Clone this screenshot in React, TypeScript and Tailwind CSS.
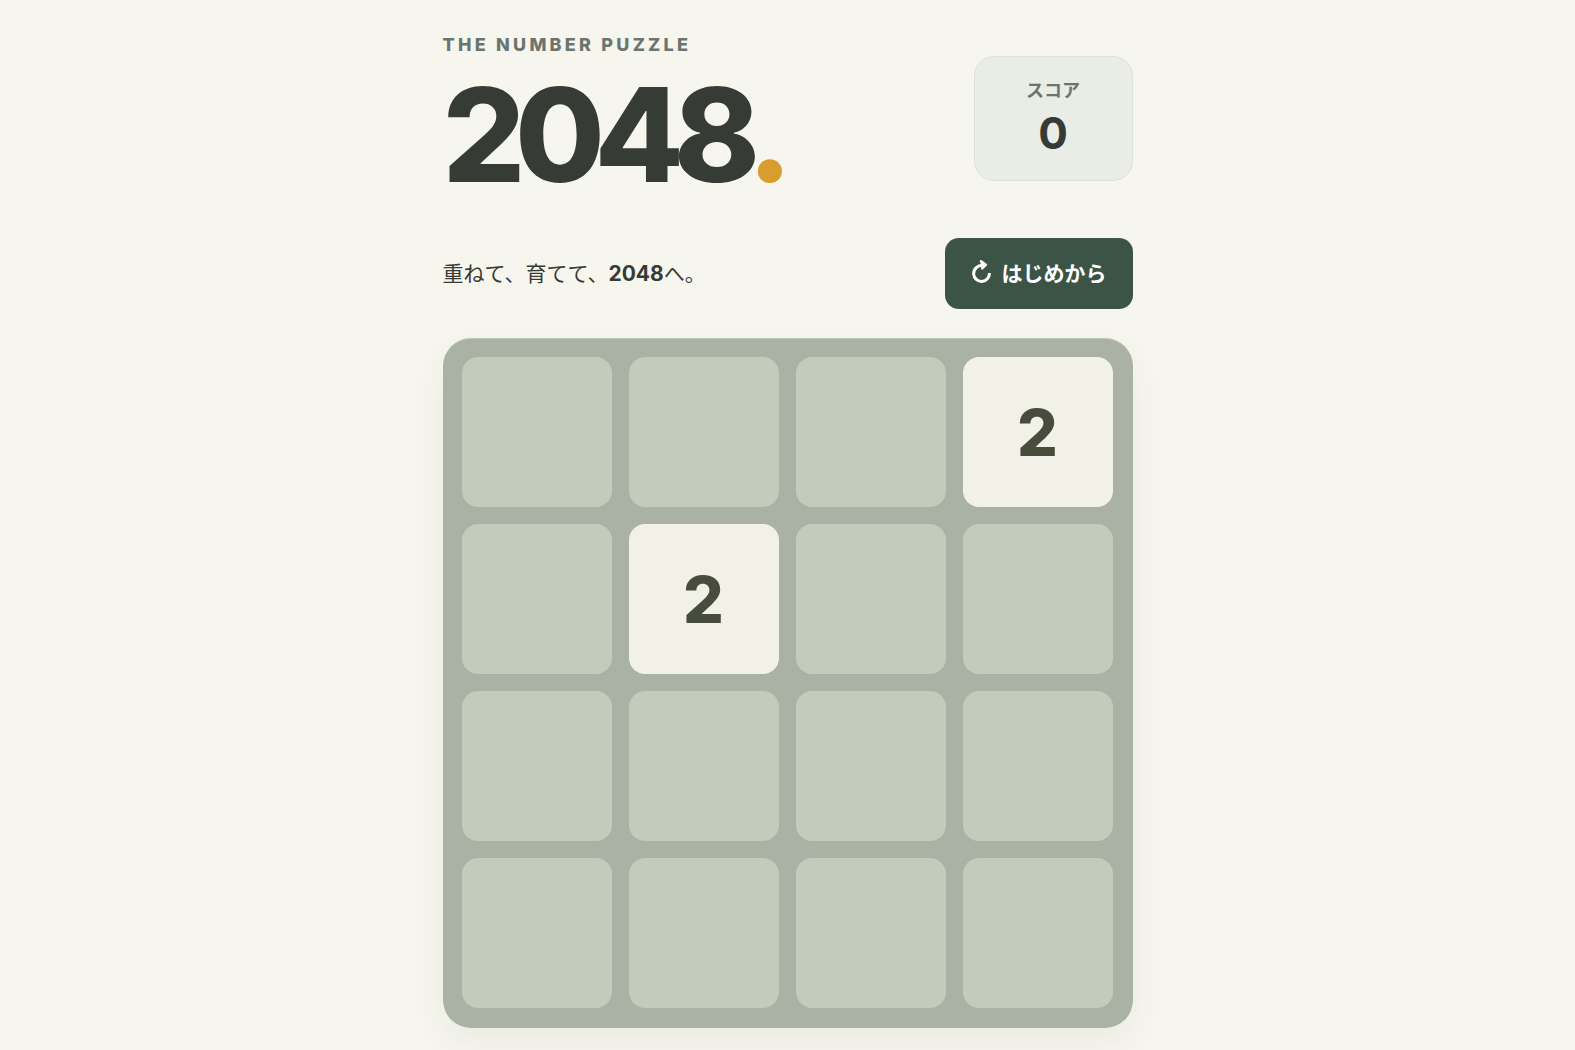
import clsx from "clsx";

const BOARD: number[][] = [
    [0, 0, 0, 2],
    [0, 2, 0, 0],
    [0, 0, 0, 0],
    [0, 0, 0, 0],
];

interface TileProps {
    value: number;
}

function Tile({ value }: TileProps) {
    return (
        <div
            className={clsx(
                "flex aspect-square items-center justify-center rounded-2xl pt-0.5 text-[64px] leading-none font-extrabold",
                value ? "bg-[#f1f1e7] text-[#484c3c]" : "bg-[#c2ccba]"
            )}
        >
            {value || null}
        </div>
    );
}

function RestartIcon() {
    return (
        <svg className="h-7 w-5" viewBox="0 0 20 28" fill="none" stroke="currentColor" aria-hidden="true">
            <path d="M12.5 5.4C6.5 4.8 2.6 9 2.6 14A7.9 7.9 0 0 0 18.4 13" strokeWidth="3" />
            <path
                d="M10 1.2L14.8 4.8L11.2 8.4L11.6 4.8Z"
                strokeWidth="2.4"
                strokeLinejoin="round"
                fill="currentColor"
            />
        </svg>
    );
}

export default function App() {
    return (
        <div className="min-h-screen bg-[#f6f6ee] font-[Inter,'Noto_Sans_CJK_JP',sans-serif] text-[#373b35]">
            <main className="mx-auto w-full max-w-[690px] pt-[33px] pb-6">
                <header className="flex items-end justify-between">
                    <div>
                        <p className="text-lg leading-6 font-extrabold tracking-[0.18em] text-[#6c756d]">
                            THE NUMBER PUZZLE
                        </p>
                        <h1 className="mt-3.5 text-[130px] leading-[128px] font-extrabold tracking-[-0.08em]">
                            2048<span className="text-[#d99d2f]">.</span>
                        </h1>
                    </div>
                    <div className="mb-[18px] flex h-[125px] w-[159px] flex-col items-center rounded-[20px] border border-[#dce1da] bg-[#e9ede6] pt-5">
                        <span className="text-lg leading-7 font-bold text-[#6c756d]">スコア</span>
                        <output className="text-[44px] leading-[56px] font-bold">0</output>
                    </div>
                </header>

                <div className="mt-[39px] flex items-center justify-between">
                    <p className="text-[21px] leading-8">
                        重ねて、育てて、<strong className="font-bold">2048</strong>へ。
                    </p>
                    <button
                        type="button"
                        className="flex h-[71px] items-center gap-[11px] rounded-[14px] bg-[#3c5446] px-[26px] text-[21px] font-bold text-white"
                    >
                        <RestartIcon />
                        はじめから
                    </button>
                </div>

                <div className="mt-[29px] grid grid-cols-4 gap-[17px] rounded-[28px] bg-[#a9b2a4] pt-[19px] pr-5 pb-5 pl-[19px] shadow-[0_16px_36px_rgba(60,50,60,0.06),inset_0_1px_0_rgba(255,255,255,0.25)]">
                    {BOARD.flat().map((value, index) => (
                        <Tile key={index} value={value} />
                    ))}
                </div>
            </main>
        </div>
    );
}
